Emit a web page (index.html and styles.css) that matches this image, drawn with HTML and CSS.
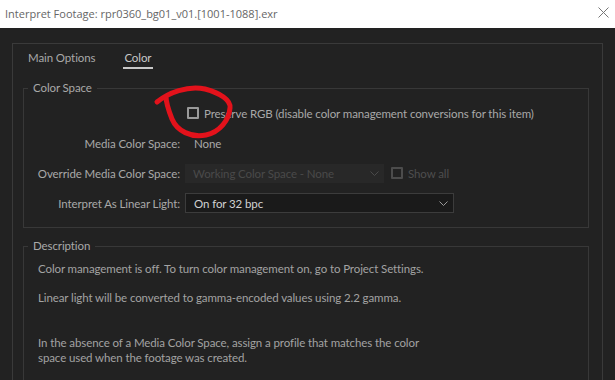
FILE: index.html
```html
<!DOCTYPE html>
<html lang="en">
<head>
  <meta charset="UTF-8" />
  <title>Interpret Footage</title>
  <link rel="stylesheet" href="styles.css">
</head>
<body>

<div class="titlebar">
  <span class="title">Interpret Footage: rpr0360_bg01_v01.[1001-1088].exr</span>
  <svg class="close" width="11" height="11" viewBox="0 0 11 11">
    <path d="M0.5 0.5 L10.5 10.5 M10.5 0.5 L0.5 10.5" stroke="#777" stroke-width="1" fill="none"/>
  </svg>
</div>

<div class="dialog">
  <div class="panel">
    <div class="tabs">
      <span class="tab">Main Options</span>
      <span class="tab active">Color</span>
    </div>

    <fieldset class="group">
      <legend>Color Space</legend>
      <div class="form">
        <span></span>
        <div class="check-row">
          <span class="box"></span>
          <span>Preserve RGB (disable color management conversions for this item)</span>
        </div>

        <span class="label">Media Color Space:</span>
        <span class="value">None</span>

        <span class="label">Override Media Color Space:</span>
        <div class="inline">
          <div class="select disabled">
            <span>Working Color Space - None</span>
            <svg width="9" height="5" viewBox="0 0 9 5"><path d="M0.5 0.5 L4.5 4.5 L8.5 0.5" stroke="#4a4a4a" fill="none"/></svg>
          </div>
          <span class="box dim"></span>
          <span class="dim-text">Show all</span>
        </div>

        <span class="label">Interpret As Linear Light:</span>
        <div class="select wide">
          <span>On for 32 bpc</span>
          <svg width="9" height="5" viewBox="0 0 9 5"><path d="M0.5 0.5 L4.5 4.5 L8.5 0.5" stroke="#9a9a9a" fill="none"/></svg>
        </div>
      </div>
    </fieldset>

    <fieldset class="group desc">
      <legend>Description</legend>
      <p>Color management is off. To turn color management on, go to Project Settings.</p>
      <p>Linear light will be converted to gamma-encoded values using 2.2 gamma.</p>
      <p class="gap">In the absence of a Media Color Space, assign a profile that matches the color<br>space used when the footage was created.</p>
    </fieldset>
  </div>
</div>

<!-- red hand-drawn mark on top of the screenshot -->
<svg class="scribble" width="615" height="380" viewBox="0 0 615 380">
  <path d="M157 102 C168 93 188 85 205 89 C220 93 231 100 230 108 C229 120 220 132 206 135 C191 138 177 131 172 119 C168 109 166 101 166 96"
        stroke="#e3121b" stroke-width="5" fill="none" stroke-linecap="round" stroke-linejoin="round"/>
</svg>

</body>
</html>
```

FILE: styles.css
```css
body {
  margin: 0;
  width: 615px;
  height: 380px;
  overflow: hidden;
  background-color: #222222;
  font-family: 'Lato', sans-serif;
  font-size: 11.5px;
  letter-spacing: -0.1px;
  color: #a9a9a9;
  position: relative;
}

.titlebar {
  height: 28px;
  background-color: #ffffff;
  display: flex;
  align-items: center;
  justify-content: space-between;
  padding: 0 6px 2px 5px;
  box-sizing: border-box;
}

.title {
  font-family: 'Open Sans', sans-serif;
  font-size: 11px;
  letter-spacing: 0;
  color: #666666;
}

.close {
  margin-bottom: 2px;
}

.dialog {
  padding: 15px 12px 0 12px;
}

.panel {
  display: flex;
  flex-direction: column;
  height: 337px;
  box-sizing: border-box;
  overflow: hidden;
  border: 1px solid #3a3a3a;
  border-bottom: none;
  padding: 0 13px 0 10px;
}

.tabs {
  display: flex;
  gap: 26px;
  padding: 6px 0 0 4px;
}

.tab {
  line-height: 16px;
  padding: 0 2px 1px 1px;
  border-bottom: 2px solid transparent;
}

.tab.active {
  color: #c8c8c8;
  border-bottom-color: #c8c8c8;
}

.group {
  margin: 11px 0 0 0;
  padding: 2px 0 9px 0;
  border: 1px solid #383838;
}

legend {
  margin-left: 4px;
  padding: 0 5px;
  line-height: 16px;
  color: #a9a9a9;
}

.form {
  display: grid;
  grid-template-columns: 156px 1fr;
  grid-auto-rows: 30px;
  column-gap: 5px;
  align-items: center;
}

.label {
  text-align: right;
}

.value {
  padding-left: 9px;
}

.check-row {
  display: flex;
  align-items: center;
  gap: 5px;
  padding-left: 2px;
}

.box {
  width: 12px;
  height: 12px;
  box-sizing: border-box;
  border: 2px solid #9a9a9a;
  border-radius: 1px;
}

.box.dim {
  border-color: #4c4c4c;
  margin-left: 7px;
}

.dim-text {
  color: #4e4e4e;
  margin-left: 5px;
}

.inline {
  display: flex;
  align-items: center;
}

.select {
  display: flex;
  align-items: center;
  justify-content: space-between;
  box-sizing: border-box;
  padding: 0 5px 0 8px;
}

.select.disabled {
  width: 199px;
  height: 19px;
  background-color: #282828;
  color: #4a4a4a;
}

.select.wide {
  width: 269px;
  height: 20px;
  background-color: #1a1a1a;
  border: 1px solid #3c3c3c;
  color: #d2d2d2;
}

.desc {
  flex: 1;
  margin-top: 10px;
  border-bottom: none;
  padding: 7px 0 0 0;
}

.desc p {
  margin: 0 0 14px 14px;
  line-height: 15px;
  color: #a3a3a3;
}

.desc p.gap {
  margin-top: 30px;
}

.scribble {
  position: absolute;
  left: 0;
  top: 0;
  pointer-events: none;
}
```
